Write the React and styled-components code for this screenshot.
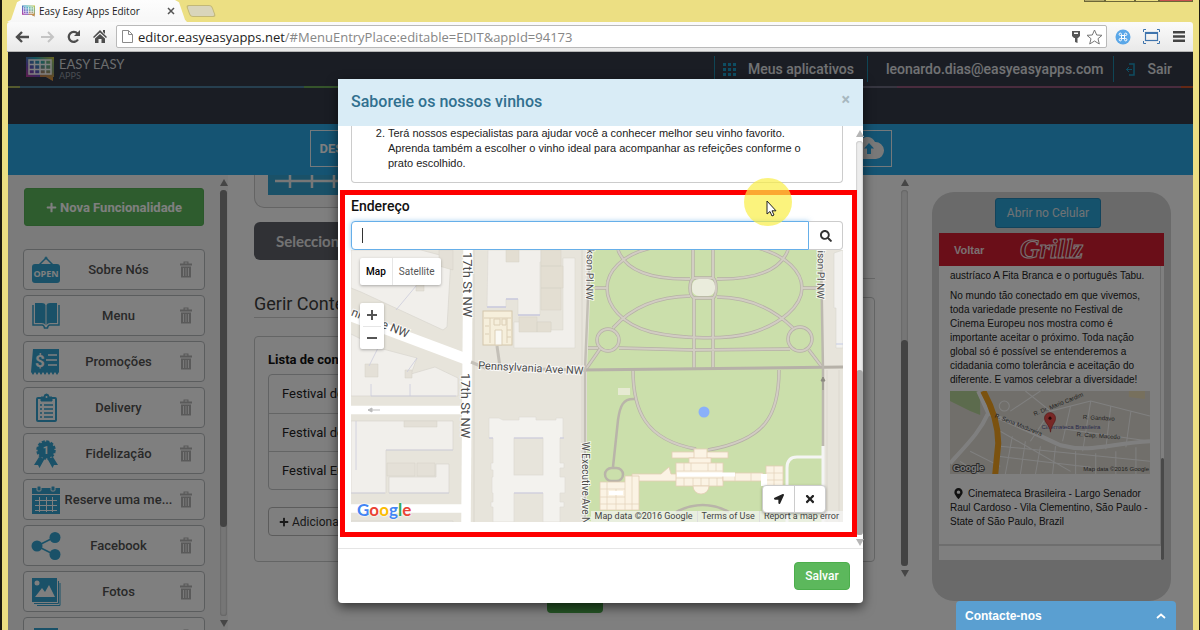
import React from 'react';
import styled, { createGlobalStyle, css } from 'styled-components';
import {
  FaPlus,
  FaSearch,
  FaLocationArrow,
  FaTimes,
  FaMapMarkerAlt,
} from 'react-icons/fa';


const GlobalStyle = createGlobalStyle`
  *, *::before, *::after {
    box-sizing: border-box;
  }

  body {
    margin: 0;
    font-family: Roboto, "Liberation Sans", sans-serif;
    font-size: 13px;
    color: #333;
  }

  button, input {
    font-family: inherit;
  }

  ul, ol, p, h1, h2, h3 {
    margin: 0;
    padding: 0;
  }

  ul {
    list-style: none;
  }

  svg {
    display: block;
    flex-shrink: 0;
  }
`;


/* ---------- browser window ---------- */

const BrowserWindow = styled.div`
  height: 100vh;
  display: flex;
  flex-direction: column;
  overflow: hidden;
  background-color: #ecdf83;
  border-left: 2px solid #1c1a10;
  border-right: 1px solid #1c1a10;
  padding: 0 6px 0 5px;
`;

const TabStrip = styled.div`
  display: flex;
  align-items: flex-end;
  height: 22px;
  flex-shrink: 0;
`;

const BrowserTab = styled.div`
  display: flex;
  align-items: center;
  height: 22px;
  width: 180px;
  padding: 0 12px 0 15px;
  gap: 4px;
  font-family: "Open Sans", sans-serif;
  font-size: 10px;
  color: #222;
  background: linear-gradient(#fdfdfd, #f7f7f7);
  clip-path: polygon(0 100%, 4px 90%, 10px 10%, 14px 0, 168px 0, 172px 10%, 178px 90%, 100% 100%);
`;

const TabTitle = styled.span`
  flex: 1;
  white-space: nowrap;
`;

const TabClose = styled.button`
  display: flex;
  padding: 0;
  border: 0;
  background: none;
  color: #555;
`;

const NewTab = styled.button`
  width: 26px;
  height: 12px;
  margin: 0 0 5px 1px;
  padding: 0;
  border: 1px solid #c2b877;
  border-radius: 3px;
  background-color: #d9d5bb;
  transform: skewX(20deg);
`;

const WindowControls = styled.div`
  display: flex;
  align-self: flex-start;
  margin-left: auto;
  height: 2px;
`;

const WindowControl = styled.span`
  width: ${({ $width }) => $width}px;
  background-color: ${({ $color }) => $color};
  border: 1px solid #6d6738;
  border-top: 0;
`;

const Toolbar = styled.div`
  display: flex;
  align-items: center;
  gap: 8px;
  height: 30px;
  flex-shrink: 0;
  padding: 0 6px 0 7px;
  background: linear-gradient(#fbfbfb, #e9e9e9);
  border-bottom: 1px solid #b5b5b5;
  border-radius: 3px 3px 0 0;
`;

const ToolGroup = styled.div`
  display: flex;
  gap: ${({ $gap }) => $gap}px;
`;

const ToolButton = styled.button`
  display: flex;
  align-items: center;
  justify-content: center;
  width: 16px;
  height: 16px;
  padding: 0;
  border: 0;
  background: none;
  color: ${({ $faded }) => ($faded ? '#c4c4c4' : '#4d4d4d')};
`;

const AddressBar = styled.div`
  flex: 1;
  display: flex;
  align-items: center;
  gap: 5px;
  height: 23px;
  padding: 0 3px 0 5px;
  background-color: #fff;
  border: 1px solid #b9b9b9;
  border-radius: 2px;
  font-family: "Open Sans", sans-serif;
  font-size: 13px;
  color: #222;
`;

const Address = styled.span`
  flex: 1;
  white-space: nowrap;

  span {
    color: #868686;
  }
`;

const Page = styled.div`
  position: relative;
  flex: 1;
  min-height: 0;
  display: flex;
  flex-direction: column;
  overflow: hidden;
  margin-left: 1px;
  background-color: #fff;
`;


/* ---------- app header ---------- */

const TopBar = styled.header`
  display: flex;
  align-items: center;
  height: 34px;
  flex-shrink: 0;
  padding-left: 18px;
  background-color: #343b48;
`;

const Brand = styled.div`
  display: flex;
  align-items: center;
  gap: 5px;
  font-family: Lato, sans-serif;
  color: #d6d8dc;
`;

const BrandName = styled.div`
  font-size: 13px;
  line-height: 13px;
`;

const BrandSub = styled.div`
  font-size: 9px;
  line-height: 10px;
  color: #9299a5;
`;

const TopNav = styled.nav`
  display: flex;
  margin-left: auto;
`;

const TopLink = styled.a`
  display: flex;
  align-items: center;
  gap: 12px;
  height: 26px;
  padding: 0 ${({ $right }) => $right}px 0 ${({ $left }) => $left}px;
  border-left: 1px solid #1f8bab;
  font-size: 14px;
  font-weight: 500;
  color: #e3e5e9;
  text-decoration: none;
  white-space: nowrap;
`;

const Rainbow = styled.div`
  height: 2px;
  flex-shrink: 0;
  background: linear-gradient(
    90deg,
    #a9b45c 0 1%,
    #4c7f9e 1% 25%,
    #6aa857 25% 50%,
    #6d6c80 50% 75%,
    #94587c 75% 99%,
    #c8502b 99%
  );
`;

const SubBar = styled.div`
  height: 36px;
  flex-shrink: 0;
  background-color: #343b48;
`;

const StepBar = styled.div`
  display: flex;
  align-items: center;
  justify-content: center;
  gap: 457px;
  height: 51px;
  flex-shrink: 0;
  padding-bottom: 3px;
  background-color: #2aa8e6;
`;

const StepButton = styled.button`
  display: flex;
  align-items: center;
  width: ${({ $width }) => $width}px;
  height: 37px;
  padding: 0 9px;
  border: 1px solid #e8f3f9;
  background: none;
  color: #fff;
  font-size: 13px;
  font-weight: 700;
`;

const Workspace = styled.div`
  flex: 1;
  min-height: 0;
  display: flex;
`;


/* ---------- scroll rail ---------- */

const RailBox = styled.div`
  display: flex;
  flex-direction: column;
  align-items: center;
  gap: 4px;
  width: 7px;
  flex-shrink: 0;
  padding: 4px 0 3px;
`;

const Arrow = styled.span`
  border: 4px solid transparent;
  border-top-width: ${({ $down }) => ($down ? 7 : 0)}px;
  border-bottom-width: ${({ $down }) => ($down ? 0 : 7)}px;
  border-${({ $down }) => ($down ? 'top' : 'bottom')}-color: ${({ $light }) => ($light ? '#b5b5b5' : '#8c8c8c')};
`;

const Track = styled.div`
  flex: 1;
  display: flex;
  flex-direction: column;
  width: 7px;
  border-radius: 4px;
  background-color: #ececec;
  box-shadow: inset 0 0 2px #999;

  &::before {
    content: '';
    flex: ${({ $from }) => $from};
  }

  &::after {
    content: '';
    flex: ${({ $from, $size }) => 100 - $from - $size};
  }
`;

const Thumb = styled.div`
  flex: ${({ $size }) => $size};
  border-radius: 4px;
  background-color: ${({ $light }) => ($light ? '#a6a6a6' : '#868686')};
`;

const Rail = ({ from, size, light, className }) => (
  <RailBox className={className}>
    <Arrow $light={light} />
    <Track $from={from} $size={size}>
      <Thumb $size={size} $light={light} />
    </Track>
    <Arrow $down $light={light} />
  </RailBox>
);


/* ---------- sidebar ---------- */

const Sidebar = styled.aside`
  display: flex;
  justify-content: space-between;
  width: 220px;
  flex-shrink: 0;
  padding: 0 1px 0 15px;
  background-color: #f6f6f6;
`;

const SidebarContent = styled.div`
  width: 182px;
  padding-top: 13px;
  overflow: hidden;
`;

const NewFeature = styled.button`
  display: flex;
  align-items: center;
  justify-content: center;
  gap: 3px;
  width: 180px;
  height: 38px;
  margin: 0 1px 23px;
  border: 1px solid #56b156;
  border-radius: 3px;
  background-color: #5cb85c;
  color: #fff;
  font-size: 13px;
  font-weight: 700;
`;

const FeatureList = styled.ul`
  display: flex;
  flex-direction: column;
  gap: 5px;
`;

const FeatureItem = styled.li`
  display: flex;
  align-items: center;
  height: 41px;
  padding: 0 12px 0 7px;
  border: 1px solid #b7babd;
  border-radius: 4px;
  background-color: #fff;
`;

const FeatureName = styled.span`
  flex: 1;
  font-size: 13px;
  font-weight: 500;
  color: #525252;
  text-align: center;
  white-space: nowrap;
`;

const TrashButton = styled.button`
  padding: 0;
  margin-left: 4px;
  border: 0;
  background: none;
`;

const OpenIcon = () => (
  <svg width="30" height="30" viewBox="0 0 30 30" fill="none">
    <circle cx="15" cy="3" r="1" stroke="#34a3d0" />
    <path d="M8 10 L15 3 L22 10" stroke="#34a3d0" strokeWidth="1.5" />
    <rect x="1" y="9" width="28" height="19" rx="3" fill="#34a3d0" />
    <text x="15" y="22" textAnchor="middle" fontSize="9" fontWeight="700" fontFamily="Open Sans" fill="#fff">OPEN</text>
  </svg>
);

const BookIcon = () => (
  <svg width="30" height="30" viewBox="0 0 30 30" fill="#34a3d0">
    <path d="M4 2 h7 q3 0 3.500 2 v20 q-1-2-4-2 H4z" />
    <path d="M26 2 h-7 q-3 0-3.500 2 v20 q1-2 4-2 H26z" />
    <path d="M2 4 v20 h9 q2 0 2.500 3 h3 q.5-3 2.500-3 h9 V4" fill="none" stroke="#34a3d0" strokeWidth="1.500" />
  </svg>
);

const PromoIcon = () => (
  <svg width="30" height="30" viewBox="0 0 30 30">
    <path d="M2 2 h26 v23 l-2 3 -2-3 -2 3 -2-3 -2 3 -2-3 -2 3 -2-3 -2 3 -2-3 -2 3 -2-3 -2 3 -2-3z" fill="#34a3d0" />
    <text x="9" y="20" textAnchor="middle" fontSize="17" fontWeight="700" fontFamily="Roboto" fill="#fff">$</text>
    <path d="M17 8h9M15 13h11M17 18h9" stroke="#fff" strokeWidth="1.500" />
  </svg>
);

const ClipboardIcon = () => (
  <svg width="30" height="30" viewBox="0 0 30 30" fill="none" stroke="#34a3d0">
    <rect x="6" y="5" width="19" height="23" rx="1" strokeWidth="2" />
    <path d="M10 8 V4 h3 q0-3 2.500-3 q2.500 0 2.500 3 h3 v4z" fill="#34a3d0" />
    <circle cx="15.500" cy="4" r="1" fill="#fff" stroke="none" />
    <path d="M9 12h2M13 12h9M9 16h2M13 16h9M9 20h2M13 20h9M9 24h2M13 24h9" strokeWidth="1.300" />
  </svg>
);

const AwardIcon = () => (
  <svg width="30" height="30" viewBox="0 0 30 30">
    <path d="M8 18 L3 26 l4 0 1.500 3 5-9zM22 18 l5 8 -4 0 -1.500 3 -5-9z" fill="#34a3d0" />
    <circle cx="15" cy="11" r="8.500" fill="#34a3d0" stroke="#34a3d0" strokeWidth="2.500" strokeDasharray="3 1.450" />
    <text x="15" y="15" textAnchor="middle" fontSize="11" fontWeight="700" fontFamily="Roboto" fill="#fff">1</text>
  </svg>
);

const CalendarIcon = () => (
  <svg width="30" height="30" viewBox="0 0 30 30">
    <rect x="1" y="3" width="28" height="26" fill="#34a3d0" />
    <rect x="6" y="1" width="4" height="5" rx="1" fill="#34a3d0" stroke="#fff" />
    <rect x="20" y="1" width="4" height="5" rx="1" fill="#34a3d0" stroke="#fff" />
    <path d="M1 9.500H29" stroke="#fff" />
    <path d="M4 15.500H26M4 20.500H26M4 25.500H26M8.500 12V27M15.500 12V27M21.500 12V27" stroke="#fff" />
  </svg>
);

const ShareIcon = () => (
  <svg width="30" height="30" viewBox="0 0 30 30" fill="#34a3d0">
    <path d="M6 15 L24 6 M6 15 L24 24" stroke="#34a3d0" strokeWidth="1.500" />
    <circle cx="6" cy="15" r="5.500" />
    <circle cx="24" cy="6.500" r="5.500" />
    <circle cx="24" cy="23.500" r="5.500" />
  </svg>
);

const PhotosIcon = () => (
  <svg width="30" height="30" viewBox="0 0 30 30">
    <path d="M27.500 4 V26.500 H3M29 6 V28.500 H6" fill="none" stroke="#34a3d0" />
    <rect x="1" y="1" width="25" height="24" fill="#34a3d0" />
    <circle cx="6" cy="6" r="2.500" fill="#fff" />
    <path d="M4 20 L11 11 L14 15 L18 8 L24 20z" fill="#fff" />
  </svg>
);

const MailIcon = () => (
  <svg width="30" height="30" viewBox="0 0 30 30">
    <rect x="3" y="5" width="24" height="20" fill="#34a3d0" />
    <path d="M4 8 L15 16 L26 8" fill="none" stroke="#fff" strokeWidth="1.500" />
  </svg>
);

const TrashIcon = () => (
  <svg width="12" height="17" viewBox="0 0 12 17">
    <path d="M0 2.500H3.500V.500H8.500V2.500H12V4.500H0zM4.700 1.500V2.500H7.300V1.500z" fill="#b4b4b4" fillRule="evenodd" />
    <path d="M1 5.500H11V16.500H1z" fill="#b4b4b4" />
    <path d="M3.500 7V15M6 7V15M8.500 7V15" stroke="#f2f2f2" />
  </svg>
);

const features = [
  { name: 'Sobre Nós', Icon: OpenIcon },
  { name: 'Menu', Icon: BookIcon },
  { name: 'Promoções', Icon: PromoIcon },
  { name: 'Delivery', Icon: ClipboardIcon },
  { name: 'Fidelização', Icon: AwardIcon },
  { name: 'Reserve uma me...', Icon: CalendarIcon },
  { name: 'Facebook', Icon: ShareIcon },
  { name: 'Fotos', Icon: PhotosIcon },
  { name: 'Contato', Icon: MailIcon },
];


/* ---------- main column ---------- */

const Main = styled.main`
  flex: 1;
  min-width: 0;
  display: flex;
  background-color: #fff;
`;

const MainContent = styled.div`
  flex: 1;
  min-width: 0;
  padding: 0 26px;
  overflow: hidden;
`;

const MainRail = styled(Rail)`
  margin-bottom: 50px;
`;

const Columns = styled.div`
  display: grid;
  grid-template-columns: 2fr 3fr;
  align-items: end;
  gap: 20px;
`;

const IconCard = styled.div`
  height: 33px;
  padding: 0 13px;
  margin-bottom: 14px;
  border: 1px solid #c9c9c9;
  border-top: 0;
  border-radius: 0 0 10px 10px;
  background-color: #f6f6f6;
`;

const IconTile = styled.div`
  height: 20px;
  overflow: hidden;
  background-color: #34a3d0;
`;

const SelectButton = styled.button`
  display: block;
  width: 180px;
  height: 38px;
  margin-bottom: 19px;
  padding: 0 0 0 22px;
  border: 0;
  border-radius: 6px;
  background-color: #60636b;
  color: #e6e6e6;
  font-family: Lato, sans-serif;
  font-size: 15px;
  font-weight: 700;
  text-align: left;
`;

const ColumnTitle = styled.h2`
  height: 39px;
  margin-bottom: 18px;
  border-bottom: 1px solid #d0d0d0;
  font-size: 18px;
  font-weight: 400;
  line-height: 50px;
  color: #3c3c3c;
`;

const ColumnPanel = styled.section`
  height: ${({ $tall }) => ($tall ? 265 : 226)}px;
  padding: 13px;
  border: 1px solid #c9cacb;
  border-radius: 4px;
`;

const ListTitle = styled.h3`
  margin-bottom: 5px;
  font-size: 13px;
  font-weight: 700;
  line-height: 19px;
  color: #111;
`;

const ContentList = styled.ul`
  border: 1px solid #c4c6c8;
  border-radius: 4px;
`;

const ContentRow = styled.li`
  height: 38px;
  padding: 0 13px;
  line-height: 37px;
  color: #222;

  & + & {
    border-top: 1px solid #c9cacb;
  }
`;

const AddButton = styled.button`
  display: flex;
  align-items: center;
  gap: 3px;
  height: 29px;
  margin-top: 17px;
  padding: 0 10px;
  border: 1px solid #b9b9b9;
  border-radius: 4px;
  background-color: #fff;
  color: #333;
  font-size: 12px;
`;

const Publish = styled.div`
  display: flex;
  justify-content: center;
  padding: 21px 0 0 20px;
`;

const PublishButton = styled.button`
  width: 56px;
  height: 30px;
  border: 0;
  border-radius: 4px;
  background-color: #4aa84a;
`;


/* ---------- phone preview ---------- */

const Preview = styled.aside`
  width: 285px;
  flex-shrink: 0;
  padding: 17px 22px 0 24px;
`;

const Phone = styled.div`
  display: flex;
  flex-direction: column;
  align-items: center;
  padding: 6px 7px 41px;
  border-radius: 22px;
  background-color: #d4d4d4;
`;

const OpenPhone = styled.button`
  width: 106px;
  height: 30px;
  margin: 0 7px 5px 0;
  border: 1px solid #2589b8;
  border-radius: 3px;
  background-color: #2aa4d8;
  color: #e0e6ea;
  font-size: 12px;
`;

const Screen = styled.div`
  width: 100%;
  background-color: #fff;
`;

const ScreenBar = styled.div`
  display: flex;
  align-items: center;
  height: 33px;
  padding-left: 15px;
  background-color: #d51d30;
`;

const BackLink = styled.a`
  width: 64px;
  font-family: "Liberation Sans", sans-serif;
  font-size: 11px;
  font-weight: 700;
  color: #f4dfe1;
  text-decoration: none;
`;

const ScreenBody = styled.div`
  display: flex;
  justify-content: space-between;
  height: 294px;
`;

const Article = styled.article`
  flex: 1;
  height: 280px;
  padding: 3px 10px 0 11px;
  border-right: 1px solid #ddd;
  border-bottom: 2px solid #dcdcdc;
  font-family: "Liberation Sans", sans-serif;
  font-size: 10px;
  line-height: 14px;
  color: #222;

  p {
    white-space: nowrap;
  }

  p + p {
    margin-top: 6px;
  }
`;

const SmallMap = styled.svg`
  width: 100%;
  margin: 4px 0 13px;
`;

const Pin = styled(FaMapMarkerAlt)`
  display: inline-block;
  margin: 0 4px 0 3px;
  vertical-align: -2px;
`;

const ScreenThumb = styled.div`
  align-self: flex-end;
  width: 3px;
  height: 102px;
  border-radius: 2px;
  background-color: #929292;
`;

const ContactBar = styled.button`
  position: absolute;
  right: 17px;
  bottom: 0;
  display: flex;
  align-items: center;
  justify-content: space-between;
  width: 220px;
  height: 29px;
  padding: 0 10px 0 9px;
  border: 0;
  border-radius: 4px 4px 0 0;
  background-color: #5a9fd1;
  color: #fff;
  font-family: "Liberation Sans", sans-serif;
  font-size: 12px;
  font-weight: 700;
`;


/* ---------- modal ---------- */

const Backdrop = styled.div`
  position: absolute;
  inset: 0;
  display: flex;
  justify-content: center;
  align-items: flex-start;
  padding-top: 27px;
  background-color: rgba(0, 0, 0, 0.5);
`;

const Dialog = styled.div`
  width: 525px;
  max-width: 100%;
  border-radius: 4px;
  background-color: #fff;
  box-shadow: 0 4px 12px rgba(0, 0, 0, 0.6);
`;

const DialogHeader = styled.div`
  display: flex;
  justify-content: space-between;
  height: 47px;
  padding: 0 13px;
  background-color: #d9ecf6;
`;

const DialogTitle = styled.h1`
  font-size: 16px;
  font-weight: 500;
  line-height: 45px;
  color: #31708f;
`;

const CloseButton = styled.button`
  height: 40px;
  padding: 0;
  border: 0;
  background: none;
  font-size: 16px;
  font-weight: 700;
  color: #a8b8c0;
`;

const DialogBody = styled.div`
  display: flex;
  justify-content: space-between;
  height: 422px;
`;

const DialogContent = styled.div`
  flex: 1;
  padding: 0 13px;
`;

const TextPanel = styled.div`
  height: 57px;
  margin-bottom: 13px;
  padding-right: 16px;
  overflow: hidden;
  border: 1px solid #ccc;
  border-top: 0;
  border-radius: 0 0 4px 4px;
  font-family: "Liberation Sans", sans-serif;
  font-size: 11px;
  line-height: 15px;
  color: #222;

  ol {
    padding-left: 36px;
  }
`;

const AddressSection = styled.section`
  position: relative;
  width: 492px;
  max-width: 100%;
`;

const AddressLabel = styled.label`
  display: block;
  height: 25px;
  font-size: 14px;
  font-weight: 500;
  line-height: 20px;
  color: #111;
`;

const SearchRow = styled.div`
  position: relative;
  display: flex;
  height: 29px;

  &::after {
    content: '';
    position: absolute;
    left: 11px;
    top: 7px;
    width: 1px;
    height: 15px;
    background-color: #333;
  }
`;

const SearchInput = styled.input`
  flex: 1;
  min-width: 0;
  padding: 0 12px;
  border: 1px solid #66afe9;
  border-radius: 4px 0 0 4px;
  outline: 0;
  box-shadow: 0 0 5px rgba(102, 175, 233, 0.6);
`;

const SearchButton = styled.button`
  display: flex;
  align-items: center;
  justify-content: center;
  width: 34px;
  padding: 0;
  border: 1px solid #ccc;
  border-left: 0;
  border-radius: 0 4px 4px 0;
  background-color: #fff;
  color: #333;
`;

const MapBox = styled.div`
  position: relative;
  height: 272px;
  overflow: hidden;
`;

const MapDrawing = styled.svg`
  width: 100%;
  height: 100%;
`;

const floating = css`
  position: absolute;
  display: flex;
  background-color: #fff;
  border-radius: 2px;
  box-shadow: 0 1px 3px rgba(0, 0, 0, 0.3);
`;

const MapTypes = styled.div`
  ${floating}
  left: 9px;
  top: 8px;
`;

const MapType = styled.button`
  height: 27px;
  padding: 0 6px;
  border: 0;
  background: none;
  font-size: 10px;
  font-weight: ${({ $active }) => ($active ? 500 : 400)};
  color: ${({ $active }) => ($active ? '#000' : '#565656')};

  & + & {
    border-left: 1px solid #e6e6e6;
  }
`;

const ZoomButtons = styled.div`
  ${floating}
  left: 9px;
  top: 53px;
  flex-direction: column;
  width: 24px;
  padding: 0 3px;
`;

const ZoomButton = styled.button`
  height: 23px;
  padding: 0;
  border: 0;
  background: none;
  display: flex;
  align-items: center;
  justify-content: center;

  & + & {
    border-top: 1px solid #e6e6e6;
  }
`;

const MapActions = styled.div`
  ${floating}
  right: 17px;
  bottom: 9px;
  border: 1px solid #ccc;
  border-radius: 4px;
`;

const MapAction = styled.button`
  display: flex;
  align-items: center;
  justify-content: center;
  width: 31px;
  height: 26px;
  padding: 0;
  border: 0;
  background: none;
  color: #222;

  & + & {
    border-left: 1px solid #ccc;
  }
`;

const Attribution = styled.div`
  position: absolute;
  right: 0;
  bottom: 0;
  display: flex;
  background-color: rgba(245, 245, 245, 0.7);
  font-size: 9px;
  line-height: 11px;
  color: #444;
  white-space: nowrap;

  span, a {
    padding: 0 4px;
    color: inherit;
    text-decoration: none;
  }

  a {
    border-left: 1px solid #ddd;
  }
`;

const GoogleMark = styled.div`
  position: absolute;
  left: 6px;
  bottom: 1px;
  display: flex;
  font-family: Lato, sans-serif;
  font-size: 17px;
  font-weight: 700;
  line-height: 22px;
  text-shadow: 0 0 2px #fff, 0 0 2px #fff;
`;

const Letter = styled.span`
  color: ${({ $color }) => $color};
`;

const Highlight = styled.div`
  position: absolute;
  inset: -6px -14px -15px -11px;
  border: 5px solid #fe0000;
  pointer-events: none;
`;

const Spotlight = styled.div`
  position: absolute;
  top: -18px;
  right: 51px;
  width: 48px;
  height: 48px;
  border-radius: 50%;
  background-color: rgba(250, 238, 70, 0.7);
`;

const Pointer = styled.svg`
  position: absolute;
  left: 22px;
  top: 22px;
`;

const ModalRail = styled(Rail)`
  padding-bottom: 2px;
`;

const DialogFooter = styled.div`
  display: flex;
  justify-content: flex-end;
  padding: 13px;
  border-top: 1px solid #e5e5e5;
`;

const SaveButton = styled.button`
  width: 56px;
  height: 28px;
  padding: 0;
  border: 1px solid #4cae4c;
  border-radius: 4px;
  background-color: #5cb85c;
  color: #fff;
  font-size: 12px;
  font-weight: 500;
`;


const BrandLogo = ({ width, height }) => (
  <svg width={width} height={height} viewBox="0 0 28 24">
    <defs>
      <linearGradient id="brand" x1="0" y1="1" x2="1" y2="0">
        <stop offset="0" stopColor="#d8338c" />
        <stop offset=".35" stopColor="#6a4fc0" />
        <stop offset=".65" stopColor="#28a8b8" />
        <stop offset="1" stopColor="#d8c83c" />
      </linearGradient>
      <linearGradient id="brandWarm" x1="0" y1="0" x2="0" y2="1">
        <stop offset=".2" stopColor="#e8a030" stopOpacity="0" />
        <stop offset="1" stopColor="#f0962c" />
      </linearGradient>
    </defs>
    <path d="M0 0H28V20H27V24L20 20H0z" fill="url(#brand)" />
    <path d="M14 0H28V20H27V24L20 20H14z" fill="url(#brandWarm)" />
    <path
      d="M3 3H25V17H3zM3 7.500H25M3 12.500H25M8.500 3V17M14 3V17M19.500 3V17"
      fill="none"
      stroke="#fff"
      strokeWidth="1.500"
    />
  </svg>
);

const StreetMap = () => (
  <MapDrawing viewBox="0 0 492 272" preserveAspectRatio="xMidYMid slice">
    <rect width="492" height="272" fill="#e7e4db" />

    {/* blocks west of 17th St */}
    <g fill="#f1efeb" stroke="#d9d6cf" strokeWidth=".7">
      <path d="M0 0H70L100 8L96 77L92 80L10 42L0 38z" />
      <path d="M0 84L28 98L66 108L60 124L84 117L107 128V146H0z" />
      <path d="M0 171H102V200H35V243H0z" />
      <path d="M38 227H85V214H98V243H38z" />
      <path d="M0 271H102V272H0z" />
    </g>
    <g fill="#e4e0d7" stroke="#d5d0c5" strokeWidth=".5">
      <path d="M14 114h13v13h-13zM54 120h7v8h-7zM53 171h33v6h-33zM36 213h28v13h-28zM66 213h18v13h-18z" />
      <path d="M65 34h8v7h-8zM88 0h14v20l-14-4z" />
    </g>
    <path d="M20 146H105M35 200H102M0 243H34M38 243H98M5 171V220M45 60L65 36M27 98L18 116M66 108L56 122M20 134V146M59 134V146" fill="none" stroke="#cccbdc" strokeWidth=".8" />

    {/* block between 17th St and Jackson Pl */}
    <path d="M123 0V272M231 0V272" stroke="#dad6cd" />
    <g fill="#f1efeb" stroke="#dcd9d2" strokeWidth=".6">
      <path d="M137 0H190V12H189V65H167V49H155V57H136z" />
      <path d="M163 72H200V80H212V8H224V98H163z" />
    </g>
    <g fill="#e3ded2" stroke="#d5d0c5" strokeWidth=".5">
      <path d="M155 0h13v12h-13zM190 0h20v16h-20zM190 16h22v22h-22zM190 38h20v22h-20zM168 67h18v15h-18zM186 72h14v10h-14z" />
    </g>
    <path d="M136 57h19M155 49h12M167 65h22" stroke="#c9c9e0" strokeWidth="1.500" />
    <rect x="132" y="61" width="29" height="34" fill="#f6efdc" stroke="#d4c6ab" />
    <path d="M133 68H160M139 68V93M156 68V93M143 69h6v6h-6zM151 69h4v6h-4zM134 76h4M134 84h4M156 80h4M156 87h4" fill="none" stroke="#dccfb6" />
    <path d="M144 80h7v15h-7z" fill="#faf9f4" stroke="#dccfb6" />
    <path d="M146 96L149 117" stroke="#c4c0b8" strokeWidth="3" />

    {/* executive office building */}
    <path
      d="M138 168H148L152 170H168V167H185V170H205V168H212V188H209V213H213V218H209V227H214V243H209V252H213V257H209V272H192V243H163V272H142V257H140V252H142V243H141V227H142V220H140V213H142V188H138z"
      fill="#f3f2ee"
      stroke="#e0ddd6"
      strokeWidth=".7"
    />
    <rect x="163" y="188" width="29" height="37" fill="#e7e4db" stroke="#dcd9d2" strokeWidth=".7" />
    <path d="M163 188H192M163 243H192M138 188H142M209 188H213" stroke="#c9c9e0" />

    {/* streets */}
    <path d="M0 66L115 109" stroke="#fff" strokeWidth="11" />
    <path d="M0 160H114M0 258.500H114" stroke="#fff" strokeWidth="8.500" />
    <path d="M117 0L115 272" stroke="#fff" strokeWidth="9.500" />
    <path d="M17 160H29M17 160l4-2v4z" stroke="#bbb" strokeWidth="1" fill="#bbb" />
    <path d="M120 112L134 118L236 120" fill="none" stroke="#c5c1b9" strokeWidth="3" />

    {/* park */}
    <path d="M241 0H470L472 120V272H236V120z" fill="#cbdfab" />
    <g fill="none" stroke="#b6b0a6" strokeWidth="3.400">
      <path id="paths" d="M300 -2C270 5 256 22 256 38C256 55 270 74 300 82C330 89 376 90 400 83C430 74 451 56 451 38C451 22 436 6 407 -2M267 0Q278 30 339 29M437 0Q426 30 366 29M262 78Q290 47 339 46M442 78Q410 47 366 47M342 0V29M362 0V29M343 47V118M362 47V118M343 28H362Q365 30 365 38Q365 46 362 48H343Q339 46 339 38Q339 30 343 28M244 38H256M451 38H470M268 98L342 100L439 99M237 98H247M249 99L235 119M458 100L471 117" />
      <circle cx="257" cy="90" r="11" />
      <circle cx="449" cy="89" r="12" />
      <path d="M282 120C282 160 294 190 345 199M428 120C428 165 415 190 357 200" />
    </g>
    <g fill="none" stroke="#d2cdc3" strokeWidth="2">
      <use href="#paths" />
      <circle cx="257" cy="90" r="11" />
      <circle cx="449" cy="89" r="12" />
      <path d="M282 120C282 160 294 190 345 199M428 120C428 165 415 190 357 200" />
    </g>
    <g fill="none" stroke="#b9b4a9" strokeWidth="2.500">
      <path d="M284 149C272 148 269 156 267 170L262 217M325 262Q352 248 378 262" />
      <rect x="254" y="218" width="18" height="13" rx="6.500" />
    </g>
    <rect x="341" y="29" width="23" height="17" rx="7" fill="#eaecdc" />
    <path d="M229 120L492 117" stroke="#b6b1a8" strokeWidth="3" />
    <path d="M239 0L234 120V272" fill="none" stroke="#c3bfb6" strokeWidth="2.500" />
    <path d="M470 0L472 120V196" fill="none" stroke="#bcb8af" strokeWidth="2.500" />
    <path d="M472 196V272" stroke="#f4f4f4" strokeWidth="3" />
    <path d="M472 207H446Q436 207 436 218V272" fill="none" stroke="#f5f5f3" strokeWidth="3" />
    <path d="M472 140V129M472 127l-2 4h4z" stroke="#8b8880" fill="#8b8880" />

    {/* east side */}
    <path d="M483 3L492 0V98H485V58H483z" fill="#f2f1ee" stroke="#d9d6d0" strokeWidth=".6" />
    <path d="M485 94H492" stroke="#c4cbe4" />
    <path d="M476 120V272M488 120V272" stroke="#dcd8cf" />
    <rect x="267" y="138" width="12" height="7" fill="#e6ead2" />

    {/* White House */}
    <g fill="#fbf3e4" stroke="#e3cdb4" strokeWidth=".8">
      <path d="M281 224H310L318 217L320 224H326V231H281z" />
      <rect x="321" y="202" width="56" height="6" />
      <rect x="343" y="199" width="13" height="15" />
      <rect x="338" y="208" width="22" height="6" />
      <rect x="325" y="213" width="47" height="23" />
      <path d="M342 236A8 8 0 0 0 358 236z" />
      <rect x="372" y="223" width="40" height="8" />
      <rect x="415" y="216" width="17" height="22" />
      <path d="M249 232H274V226H288V260H249z" />
    </g>
    <path d="M325 221H372M325 228H372M333 213V221M340 213V221M357 213V221M365 213V221M333 228V236M342 228V236M350 228V236M358 228V236M366 228V236M249 239H274M249 247H274M249 254H288M256 232V260M265 239V260M274 232V260M281 226V260M415 223H432M415 230H432M423 216V238M384 223V231M400 223V231" stroke="#e6d4bd" strokeWidth=".8" />
    <path d="M326 224.500H384" stroke="#fff" strokeWidth="4" />
    <path d="M258 241h14v4h-14zM410 224h6v12h-6z" fill="#fff" />

    <circle cx="353" cy="162" r="5.500" fill="#8ab0fa" />

    <g fontFamily="Roboto" fill="#4c4c4c" stroke="#fff" strokeWidth="2" strokeOpacity=".8" paintOrder="stroke">
      <text fontSize="13" transform="translate(112 2) rotate(90)">17th St NW</text>
      <text fontSize="13" transform="translate(110 123) rotate(90)">17th St NW</text>
      <text fontSize="12" textAnchor="end" transform="translate(56 88) rotate(22)">nia Ave NW</text>
      <text fontSize="11" transform="translate(127 119) rotate(3)">Pennsylvania Ave NW</text>
      <text fontSize="10" textAnchor="end" transform="translate(235 50) rotate(91)">Jackson Pl NW</text>
      <text fontSize="10" textAnchor="end" transform="translate(466 49) rotate(91)">Madison Pl NW</text>
      <text fontSize="10" transform="translate(231 192) rotate(90)">W Executive Ave NW</text>
    </g>
  </MapDrawing>
);

const PreviewMap = () => (
  <SmallMap viewBox="0 0 199 83">
    <rect width="199" height="83" fill="#e3dfd6" />
    <path d="M0 0H30V24L20 20L0 10z" fill="#b9d79a" />
    <path d="M178 0h16v8l-16-2z" fill="#efe0bb" />
    <g fill="none" stroke="#fff" strokeWidth="1">
      <path d="M50 40L120 80M60 20L90 0M75 0L100 20L140 10L199 25M100 20L80 50M120 15L112 50M140 10L132 60M160 15L155 58M180 20L175 56M50 55L199 70M62 45L55 83M75 50L70 83M90 55L85 83M105 55L102 83M125 60V83M145 62V83M165 60V83M185 56V83M20 60L50 75M10 70L30 83M48 65L140 76M95 35L199 50" />
      <circle cx="54" cy="15" r="5" />
    </g>
    <path d="M0 72C20 50 30 40 38 22L28 0M38 22C70 35 90 45 110 54C140 62 160 52 199 50" fill="none" stroke="#fff" strokeWidth="4" />
    <path d="M33 0C42 16 48 34 48 52L45 83" fill="none" stroke="#f7a41e" strokeWidth="6" />
    <g fontFamily="Liberation Sans" fontSize="6" fill="#444">
      <text transform="translate(84 25) rotate(-22)">R. Dr. Mario Cardim</text>
      <text x="132" y="28" transform="rotate(3 132 28)">R. Gandavo</text>
      <text x="126" y="45" transform="rotate(4 126 45)">R. Cap. Macedo</text>
      <text transform="translate(44 26) rotate(22)">R. Sena Madureira</text>
      <text x="91" y="38" fill="#54549a">Cinemateca Brasileira</text>
      <text x="198" y="80" textAnchor="end">Map data ©2016 Google</text>
      <text x="3" y="80" fontSize="9" fontWeight="700" fill="#fff" stroke="#555" strokeWidth="2" paintOrder="stroke">Google</text>
    </g>
    <path d="M100 41C99 33 94 32 94 27A5.500 5.500 0 0 1 105 27C105 32 101 33 100 41z" fill="#f0504c" stroke="#a32c2c" strokeWidth=".6" />
    <circle cx="99.500" cy="27" r="1.500" fill="#50100f" />
  </SmallMap>
);


const App = () => {
  return (
    <BrowserWindow>
      <GlobalStyle />
      <TabStrip>
        <BrowserTab>
          <BrandLogo width={13} height={12} />
          <TabTitle>Easy Easy Apps Editor</TabTitle>
          <TabClose aria-label="Fechar aba">
            <svg width="8" height="8" viewBox="0 0 8 8" stroke="currentColor" strokeWidth="1.500">
              <path d="M1 1L7 7M7 1L1 7" />
            </svg>
          </TabClose>
        </BrowserTab>
        <NewTab aria-label="Nova aba" />
        <WindowControls>
          <WindowControl $width={21} $color="#b3aa6c" />
          <WindowControl $width={30} $color="#ecdf83" />
          <WindowControl $width={24} $color="#ecdf83" />
          <WindowControl $width={34} $color="#c75050" />
        </WindowControls>
      </TabStrip>
      <Toolbar>
        <ToolGroup $gap={10}>
          <ToolButton aria-label="Voltar">
            <svg width="14" height="12" viewBox="0 0 14 12" fill="none" stroke="currentColor" strokeWidth="2.400">
              <path d="M14 6H2M7 1L2 6L7 11" />
            </svg>
          </ToolButton>
          <ToolButton $faded aria-label="Avançar">
            <svg width="14" height="12" viewBox="0 0 14 12" fill="none" stroke="currentColor" strokeWidth="2">
              <path d="M0 6H12M7 1L12 6L7 11" />
            </svg>
          </ToolButton>
          <ToolButton aria-label="Recarregar">
            <svg width="14" height="13" viewBox="0 0 14 13" fill="none" stroke="currentColor" strokeWidth="2.300">
              <path d="M11 9.500A5 5 0 1 1 10.500 3.500" />
              <path d="M13 0V6H7z" fill="currentColor" stroke="none" />
            </svg>
          </ToolButton>
          <ToolButton aria-label="Página inicial">
            <svg width="14" height="13" viewBox="0 0 14 13" fill="currentColor">
              <path d="M7 0L14 7L13 8L7 2.500L1 8L0 7zM10 0h2v4l-2-2z" />
              <path d="M7 4L12 8.500V13H8.500V9H5.500V13H2V8.500z" />
            </svg>
          </ToolButton>
        </ToolGroup>
        <AddressBar>
          <svg width="11" height="13" viewBox="0 0 11 13" fill="#fff" stroke="#8a8a8a">
            <path d="M.5 .5H6.500L10.500 4.500V12.500H.5zM6.500 .5V4.500H10.500" />
          </svg>
          <Address>
            editor.easyeasyapps.net<span>/#MenuEntryPlace:editable=EDIT&amp;appId=94173</span>
          </Address>
          <svg width="10" height="12" viewBox="0 0 10 12" fill="#555">
            <path d="M1 0H9V5L7 7H6.500V12L4 11V7H3L1 5zM3 1.500V3H7V1.500z" fillRule="evenodd" />
          </svg>
          <svg width="17" height="16" viewBox="0 0 17 16" fill="#fff" stroke="#777">
            <path d="M8.500 1L10.700 6L16 6.300L12 9.700L13.300 15L8.500 12L3.700 15L5 9.700L1 6.300L6.300 6z" />
          </svg>
        </AddressBar>
        <ToolGroup $gap={12}>
          <ToolButton aria-label="Extensão">
            <svg width="16" height="16" viewBox="0 0 16 16">
              <circle cx="8" cy="8" r="7.500" fill="#5aa7e8" />
              <path
                d="M6.500 6.500H9.500V9.500H6.500zM6.500 6.500H5.300A1.200 1.200 0 1 1 6.500 5.300zM9.500 6.500V5.300A1.200 1.200 0 1 1 10.700 6.500zM6.500 9.500V10.700A1.200 1.200 0 1 1 5.300 9.500zM9.500 9.500H10.700A1.200 1.200 0 1 1 9.500 10.700z"
                fill="none"
                stroke="#fff"
              />
            </svg>
          </ToolButton>
          <ToolButton aria-label="Capturar">
            <svg width="17" height="15" viewBox="0 0 17 15" fill="none" stroke="#3f74ad">
              <path d="M.5 3V.5H3M14 .5H16.500V3M16.500 12V14.500H14M3 14.500H.5V12" />
              <rect x="2.500" y="3.500" width="12" height="8" strokeWidth="1.200" />
              <path d="M3 4.500H14" />
            </svg>
          </ToolButton>
          <ToolButton aria-label="Menu do navegador">
            <svg width="12" height="11" viewBox="0 0 12 11" fill="#444">
              <path d="M0 0H12V2.500H0zM0 4.200H12V6.700H0zM0 8.500H12V11H0z" />
            </svg>
          </ToolButton>
        </ToolGroup>
      </Toolbar>

      <Page>
        <TopBar>
          <Brand>
            <BrandLogo width={28} height={24} />
            <div>
              <BrandName>EASY EASY</BrandName>
              <BrandSub>APPS</BrandSub>
            </div>
          </Brand>
          <TopNav>
            <TopLink href="#apps" $left={8} $right={13}>
              <svg width="13" height="13" viewBox="0 0 13 13" fill="#1c9ac4">
                <path d="M0 0h3v3H0zM5 0h3v3H5zM10 0h3v3h-3zM0 5h3v3H0zM5 5h3v3H5zM10 5h3v3h-3zM0 10h3v3H0zM5 10h3v3H5zM10 10h3v3h-3z" />
              </svg>
              Meus aplicativos
            </TopLink>
            <TopLink href="#conta" $left={18} $right={10}>leonardo.dias@easyeasyapps.com</TopLink>
            <TopLink href="#sair" $left={12} $right={21}>
              <svg width="9" height="13" viewBox="0 0 9 13" fill="none" stroke="#1c9ac4">
                <path d="M3 1H8V12H3" strokeWidth="1.500" />
                <path d="M0 6.500H6M3 4L.5 6.500L3 9" />
              </svg>
              Sair
            </TopLink>
          </TopNav>
        </TopBar>
        <Rainbow />
        <SubBar />
        <StepBar>
          <StepButton $width={72}>DESIGN</StepButton>
          <StepButton $width={53} aria-label="Publicar">
            <svg width="36" height="22" viewBox="0 0 36 22">
              <path d="M10 22A7 7 0 0 1 9 8A9 9 0 0 1 26 5A8.500 8.500 0 0 1 27 22z" fill="#f2f2f2" />
              <path d="M20 6L25 11.500H22V17H18V11.500H15z" fill="#2aa8e6" />
            </svg>
          </StepButton>
        </StepBar>

        <Workspace>
          <Sidebar>
            <SidebarContent>
              <NewFeature>
                <FaPlus size={11} /> Nova Funcionalidade
              </NewFeature>
              <FeatureList>
                {features.map(({ name, Icon }) => (
                  <FeatureItem key={name}>
                    <Icon />
                    <FeatureName>{name}</FeatureName>
                    <TrashButton aria-label={`Remover ${name}`}>
                      <TrashIcon />
                    </TrashButton>
                  </FeatureItem>
                ))}
              </FeatureList>
            </SidebarContent>
            <Rail from={0} size={79} />
          </Sidebar>

          <Main>
            <MainContent>
              <Columns>
                <div>
                  <IconCard>
                    <IconTile>
                      <svg width="210" height="20" viewBox="0 0 210 20" stroke="#eee" strokeWidth="2.500">
                        <path d="M7 6H200M22 0V13M44 0V13M66 0V13M88 0V13" />
                      </svg>
                    </IconTile>
                  </IconCard>
                  <SelectButton>Seleccionar ícone</SelectButton>
                  <ColumnTitle>Gerir Conteúdo</ColumnTitle>
                  <ColumnPanel>
                    <ListTitle>Lista de conteúdos</ListTitle>
                    <ContentList>
                      <ContentRow>Festival de Cinema</ContentRow>
                      <ContentRow>Festival de Vinhos</ContentRow>
                      <ContentRow>Festival Europeu</ContentRow>
                    </ContentList>
                    <AddButton>
                      <FaPlus size={10} /> Adicionar
                    </AddButton>
                  </ColumnPanel>
                </div>
                <div>
                  <ColumnTitle />
                  <ColumnPanel $tall />
                </div>
              </Columns>
              <Publish>
                <PublishButton aria-label="Publicar" />
              </Publish>
            </MainContent>
            <MainRail from={40} size={60} />
          </Main>

          <Preview>
            <Phone>
              <OpenPhone>Abrir no Celular</OpenPhone>
              <Screen>
                <ScreenBar>
                  <BackLink href="#voltar">Voltar</BackLink>
                  <svg width="70" height="33" viewBox="0 0 70 33">
                    <text
                      x="2"
                      y="25"
                      fontFamily="Liberation Serif"
                      fontSize="27"
                      fontWeight="700"
                      fontStyle="italic"
                      fill="#b5182a"
                      stroke="#f3e4e6"
                      strokeWidth="1"
                    >
                      Grillz
                    </text>
                  </svg>
                </ScreenBar>
                <ScreenBody>
                  <Article>
                    <p>austríaco A Fita Branca e o português Tabu.</p>
                    <p>
                      No mundo tão conectado em que vivemos,<br />
                      toda variedade presente no Festival de<br />
                      Cinema Europeu nos mostra como é<br />
                      importante aceitar o próximo. Toda nação<br />
                      global só é possível se entenderemos a<br />
                      cidadania como tolerância e aceitação do<br />
                      diferente. E vamos celebrar a diversidade!
                    </p>
                    <PreviewMap />
                    <p>
                      <Pin size={11} />
                      Cinemateca Brasileira - Largo Senador<br />
                      Raul Cardoso - Vila Clementino, São Paulo -<br />
                      State of São Paulo, Brazil
                    </p>
                  </Article>
                  <ScreenThumb />
                </ScreenBody>
              </Screen>
            </Phone>
          </Preview>
        </Workspace>

        <Backdrop>
          <Dialog role="dialog" aria-labelledby="dialog-title">
            <DialogHeader>
              <DialogTitle id="dialog-title">Saboreie os nossos vinhos</DialogTitle>
              <CloseButton aria-label="Fechar">×</CloseButton>
            </DialogHeader>
            <DialogBody>
              <DialogContent>
                <TextPanel>
                  <ol start={2}>
                    <li>
                      Terá nossos especialistas para ajudar você a conhecer melhor seu vinho favorito.
                      Aprenda também a escolher o vinho ideal para acompanhar as refeições conforme o
                      prato escolhido.
                    </li>
                  </ol>
                </TextPanel>
                <AddressSection>
                  <AddressLabel htmlFor="address">Endereço</AddressLabel>
                  <SearchRow>
                    <SearchInput id="address" type="text" />
                    <SearchButton aria-label="Buscar">
                      <FaSearch size={12} />
                    </SearchButton>
                  </SearchRow>
                  <MapBox>
                    <StreetMap />
                    <MapTypes>
                      <MapType $active>Map</MapType>
                      <MapType>Satellite</MapType>
                    </MapTypes>
                    <ZoomButtons>
                      <ZoomButton aria-label="Aproximar">
                        <svg width="10" height="10" viewBox="0 0 10 10" stroke="#555" strokeWidth="2">
                          <path d="M0 5H10M5 0V10" />
                        </svg>
                      </ZoomButton>
                      <ZoomButton aria-label="Afastar">
                        <svg width="10" height="10" viewBox="0 0 10 10" stroke="#555" strokeWidth="2">
                          <path d="M0 5H10" />
                        </svg>
                      </ZoomButton>
                    </ZoomButtons>
                    <GoogleMark>
                      <Letter $color="#4285f4">G</Letter>
                      <Letter $color="#ea4335">o</Letter>
                      <Letter $color="#fbbc05">o</Letter>
                      <Letter $color="#4285f4">g</Letter>
                      <Letter $color="#34a853">l</Letter>
                      <Letter $color="#ea4335">e</Letter>
                    </GoogleMark>
                    <Attribution>
                      <span>Map data ©2016 Google</span>
                      <a href="#terms">Terms of Use</a>
                      <a href="#report">Report a map error</a>
                    </Attribution>
                    <MapActions>
                      <MapAction aria-label="Minha localização">
                        <FaLocationArrow size={10} />
                      </MapAction>
                      <MapAction aria-label="Limpar">
                        <FaTimes size={12} />
                      </MapAction>
                    </MapActions>
                  </MapBox>
                  <Highlight />
                  <Spotlight>
                    <Pointer width="11" height="17" viewBox="0 0 11 17" fill="#fff" stroke="#222">
                      <path d="M1 1V14L4 11.500L6 16L8 15L6 10.800H10z" />
                    </Pointer>
                  </Spotlight>
                </AddressSection>
              </DialogContent>
              <ModalRail from={58} size={42} light />
            </DialogBody>
            <DialogFooter>
              <SaveButton>Salvar</SaveButton>
            </DialogFooter>
          </Dialog>
        </Backdrop>

        <ContactBar>
          Contacte-nos
          <svg width="10" height="6" viewBox="0 0 10 6" fill="none" stroke="#fff" strokeWidth="1.800">
            <path d="M1 5L5 1.500L9 5" />
          </svg>
        </ContactBar>
      </Page>
    </BrowserWindow>
  );
};

export default App;
